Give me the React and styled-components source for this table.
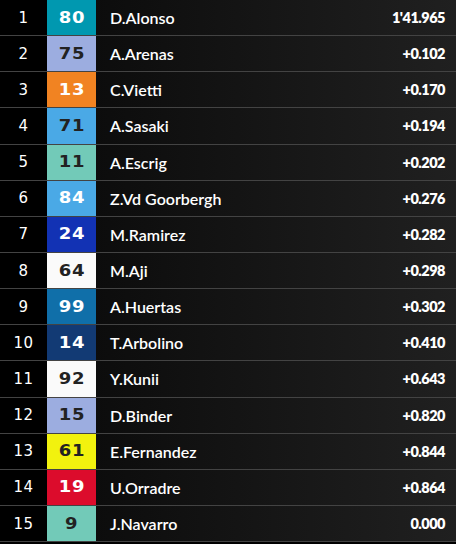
import styled, { createGlobalStyle } from "styled-components";

const riders = [
  { pos: 1, num: "80", name: "D.Alonso", time: "1'41.965", bg: "#0098b0", fg: "#fff" },
  { pos: 2, num: "75", name: "A.Arenas", time: "+0.102", bg: "#9cade0", fg: "#222" },
  { pos: 3, num: "13", name: "C.Vietti", time: "+0.170", bg: "#f18322", fg: "#fff" },
  { pos: 4, num: "71", name: "A.Sasaki", time: "+0.194", bg: "#4aa9e6", fg: "#222" },
  { pos: 5, num: "11", name: "A.Escrig", time: "+0.202", bg: "#72cab8", fg: "#222" },
  { pos: 6, num: "84", name: "Z.Vd Goorbergh", time: "+0.276", bg: "#4aa9e6", fg: "#fff" },
  { pos: 7, num: "24", name: "M.Ramirez", time: "+0.282", bg: "#1232b4", fg: "#fff" },
  { pos: 8, num: "64", name: "M.Aji", time: "+0.298", bg: "#fafafa", fg: "#222" },
  { pos: 9, num: "99", name: "A.Huertas", time: "+0.302", bg: "#106fa9", fg: "#fff" },
  { pos: 10, num: "14", name: "T.Arbolino", time: "+0.410", bg: "#123a74", fg: "#fff" },
  { pos: 11, num: "92", name: "Y.Kunii", time: "+0.643", bg: "#fafafa", fg: "#222" },
  { pos: 12, num: "15", name: "D.Binder", time: "+0.820", bg: "#9cade0", fg: "#222" },
  { pos: 13, num: "61", name: "E.Fernandez", time: "+0.844", bg: "#f2f20e", fg: "#222" },
  { pos: 14, num: "19", name: "U.Orradre", time: "+0.864", bg: "#dc0c2c", fg: "#fff" },
  { pos: 15, num: "9", name: "J.Navarro", time: "0.000", bg: "#72cab8", fg: "#222" },
];

const GlobalStyle = createGlobalStyle`
  html, body {
    margin: 0;
    padding: 0;
    background: #000;
  }
`;

const Table = styled.div`
  width: 456px;
  display: flex;
  flex-direction: column;
  font-family: "Lato", "Noto Sans", sans-serif;
`;

const Row = styled.div`
  display: grid;
  grid-template-columns: 47px 49px 1fr auto;
  height: 35.15px;
  border-bottom: 1px solid #434343;
  background: linear-gradient(90deg, #0c0c0c 20%, #202020 100%);
`;

const Pos = styled.div`
  background: #000;
  color: #fff;
  display: flex;
  align-items: center;
  justify-content: center;
  font-family: "DejaVu Sans", sans-serif;
  font-weight: 400;
  font-size: 15px;
  letter-spacing: 0.5px;
`;

const Num = styled.div`
  background: ${({ $bg }) => $bg};
  color: ${({ $fg }) => $fg};
  display: flex;
  align-items: center;
  justify-content: center;
  font-family: "DejaVu Sans", sans-serif;
  font-weight: 700;
  font-size: 15px;
`;

const NumText = styled.span`
  display: inline-block;
  transform: scaleX(1.2);
  letter-spacing: 0.5px;
`;

const Name = styled.div`
  color: #fff;
  display: flex;
  align-items: center;
  padding-left: 14px;
  font-family: "Lato", sans-serif;
  font-weight: 600;
  font-size: 16px;
`;

const Time = styled.div`
  color: #fff;
  display: flex;
  align-items: center;
  justify-content: flex-end;
  padding-right: 11px;
  font-family: "Lato", sans-serif;
  font-weight: 800;
  font-size: 14.5px;
  letter-spacing: -0.5px;
`;

export default function App() {
  return (
    <>
      <GlobalStyle />
      <Table>
        {riders.map((r) => (
          <Row key={r.pos}>
            <Pos>{r.pos}</Pos>
            <Num $bg={r.bg} $fg={r.fg}>
              <NumText>{r.num}</NumText>
            </Num>
            <Name>{r.name}</Name>
            <Time>{r.time}</Time>
          </Row>
        ))}
      </Table>
    </>
  );
}
